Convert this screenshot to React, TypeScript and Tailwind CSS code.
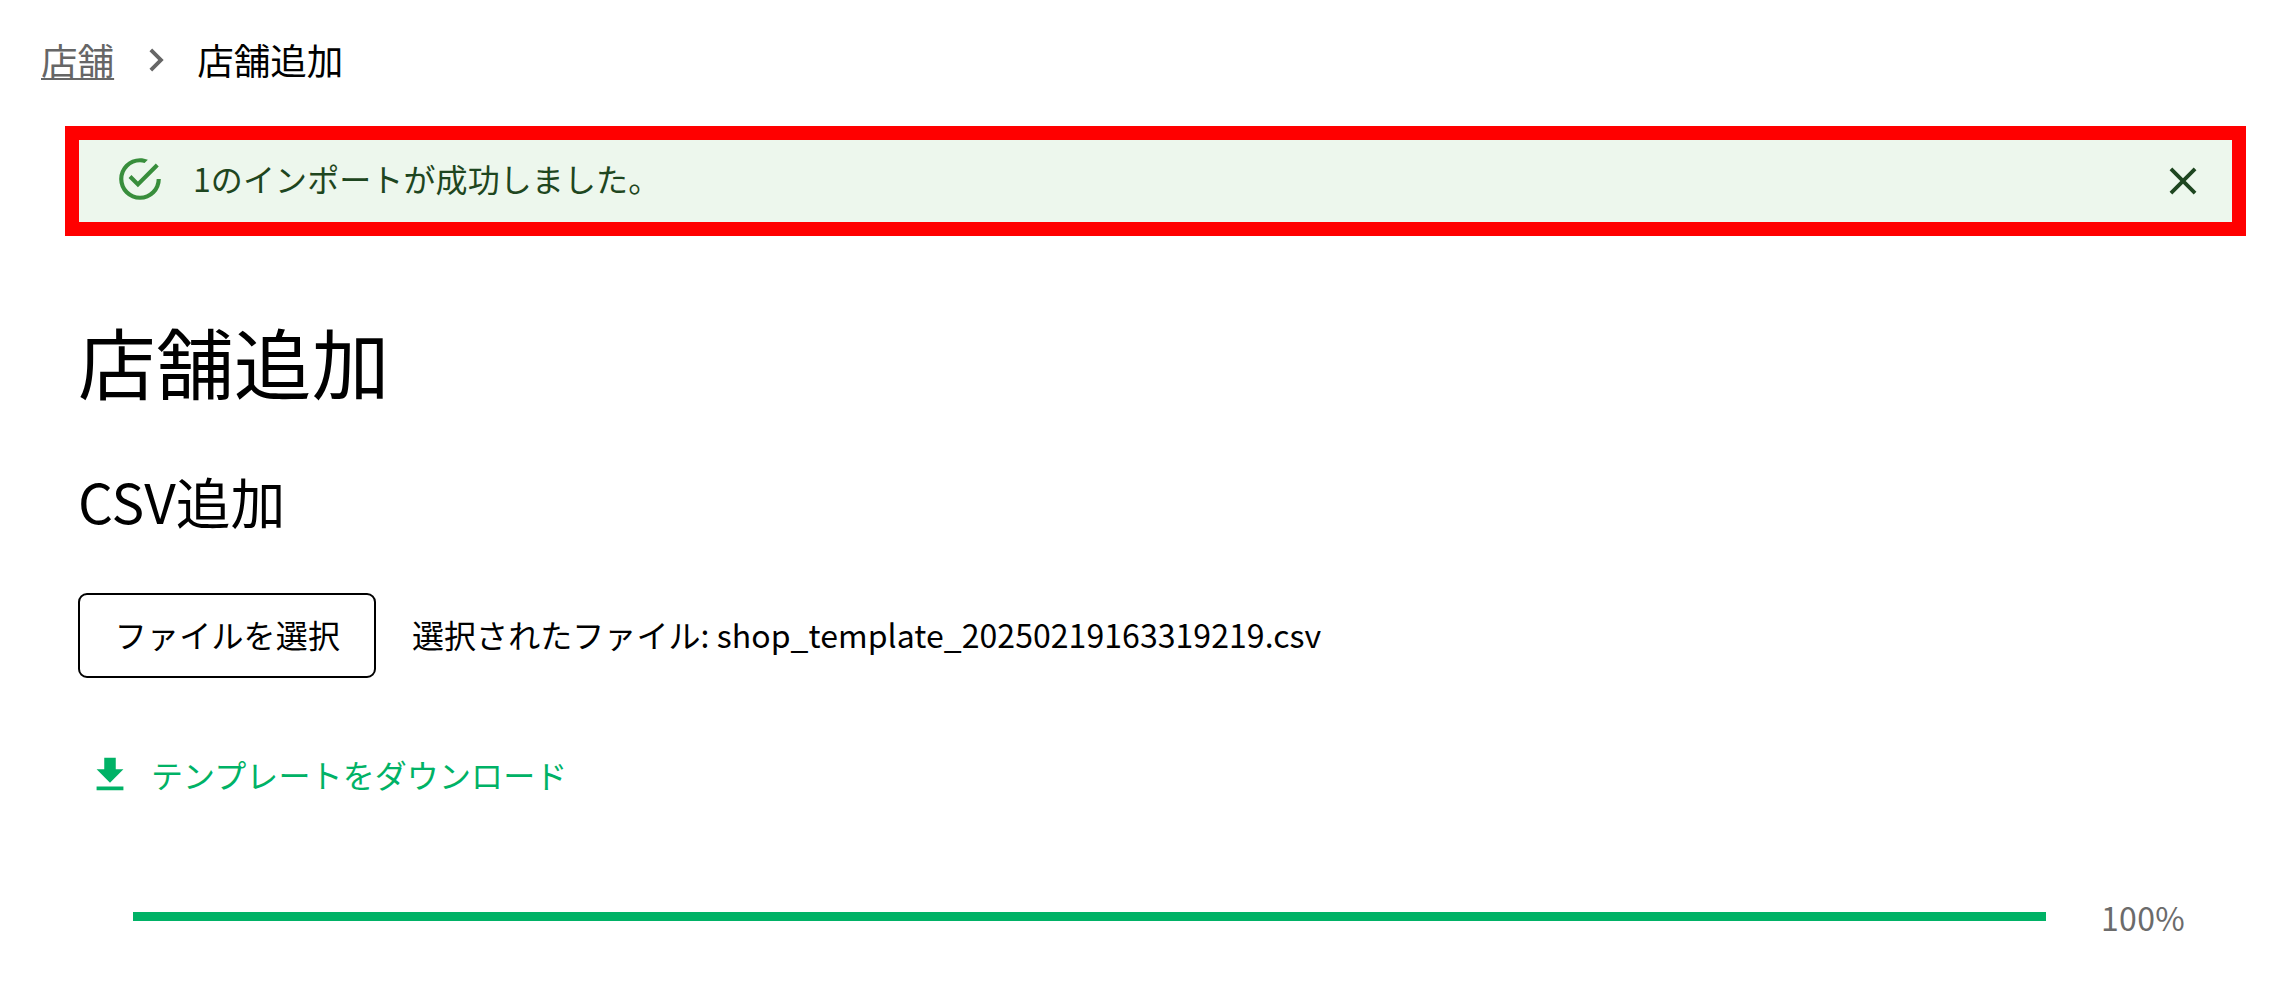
import type { ReactNode } from "react";

function Icon({ d, className }: { d: string; className: string }) {
  return (
    <svg viewBox="0 0 24 24" fill="currentColor" aria-hidden="true" className={`shrink-0 ${className}`}>
      <path d={d} />
    </svg>
  );
}

const CHEVRON = "M10 6 8.59 7.41 13.17 12l-4.58 4.59L10 18l6-6z";
const CHECK =
  "M20,12A8,8 0 0,1 12,20A8,8 0 0,1 4,12A8,8 0 0,1 12,4C12.76,4 13.5,4.11 14.2, 4.31L15.77,2.74C14.61,2.26 13.34,2 12,2A10,10 0 0,0 2,12A10,10 0 0,0 12,22A10,10 0 0, 0 22,12M7.91,10.08L6.5,11.5L11,16L21,6L19.59,4.58L11,13.17L7.91,10.08Z";
const CLOSE =
  "M19 6.41L17.59 5 12 10.59 6.41 5 5 6.41 10.59 12 5 17.59 6.41 19 12 13.41 17.59 19 19 17.59 13.41 12z";
const DOWNLOAD = "M19 9h-4V3H9v6H5l7 7 7-7zM5 18v2h14v-2H5z";

function Breadcrumbs() {
  return (
    <nav className="flex h-[50px] items-center pl-[41px] text-[36.57px] leading-[50px]">
      <a className="text-[#666] underline decoration-[2px] underline-offset-[3px]">店舗</a>
      <Icon d={CHEVRON} className="ml-[19px] mr-[18px] mb-px size-[46px] text-[#666]" />
      <span className="text-black">店舗追加</span>
    </nav>
  );
}

function SuccessAlert({ children }: { children: ReactNode }) {
  return (
    <div className="ml-[65px] mr-[43px] mt-[41px] flex h-[110px] items-center border-[14px] border-[#ff0000] bg-[#edf7ed] pl-[36px] pr-[26px] text-[#1e4620]">
      <Icon d={CHECK} className="mb-[4px] size-[50px] text-[#388e3c]" />
      <p className="mb-[6px] ml-[28px] flex-1 text-[32px] leading-[46px] tracking-[0.1px]">{children}</p>
      <button type="button" aria-label="閉じる">
        <Icon d={CLOSE} className="size-[46px]" />
      </button>
    </div>
  );
}

export default function App() {
  return (
    <div
      lang="ja"
      className="flex h-[999px] w-[2289px] flex-col bg-white pt-[35px] text-black [font-family:'Noto_Sans_CJK_JP','Noto_Sans',sans-serif]"
    >
      <Breadcrumbs />
      <SuccessAlert>1のインポートが成功しました。</SuccessAlert>
      <main className="flex flex-col pl-[78px]">
        <h1 className="mt-[76px] text-[77.7px] leading-[96px] tracking-[0.2px]">店舗追加</h1>
        <h2 className="mt-[55px] text-[54.86px] leading-[74px]">CSV追加</h2>
        <div className="mt-[56px] flex items-center">
          <button
            type="button"
            className="h-[85px] w-[298px] rounded-[9px] border-[2px] border-black pb-[3px] pl-px text-[32px] tracking-[0.2px]"
          >
            ファイルを選択
          </button>
          <p className="mb-[3px] ml-[36px] text-[32px] tracking-[0.06px]">
            選択されたファイル: shop_template_20250219163319219.csv
          </p>
        </div>
        <a className="ml-[9px] mt-[72px] flex h-[50px] items-center text-[#00b266]">
          <Icon d={DOWNLOAD} className="size-[46px]" />
          <span className="mb-[2px] ml-[18px] text-[32px] leading-[50px] tracking-[0.1px]">テンプレートをダウンロード</span>
        </a>
        <div className="mt-[93px] flex h-[48px] items-center pl-[55px]">
          <div className="mb-px h-[9px] w-[1913px] bg-[#00b266]" />
          <span className="ml-[55px] text-[32px] leading-[48px] tracking-[0.343px] text-[#6b6b6b]">100%</span>
        </div>
      </main>
    </div>
  );
}
